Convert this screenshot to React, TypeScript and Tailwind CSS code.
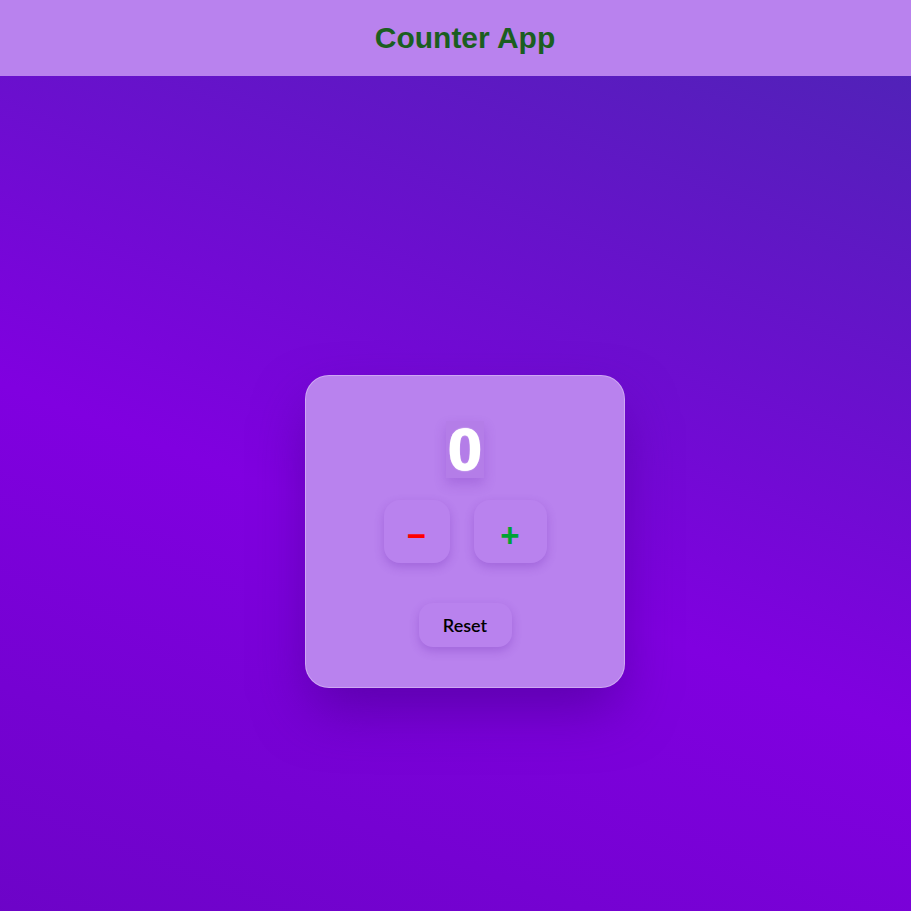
import React, { useState } from 'react';

export default function App() {
  const [count, setCount] = useState(0);

  return (
    <div className="min-h-screen w-[930px] bg-[linear-gradient(201deg,#4b26b3_0%,#8000e0_55%,#6a04c4_100%)] font-['Lato',sans-serif]">
      <header className="h-[76px] bg-[#b982ee] flex items-center justify-center">
        <h1 className="text-[30px] font-bold text-[#1b5e20] font-['Liberation_Sans',Arial,sans-serif] -mt-[2px]">
          Counter App
        </h1>
      </header>

      <main className="min-h-screen flex items-center justify-center">
        <div className="w-[320px] rounded-[24px] bg-[#b982ee] border border-white/30 shadow-[0_26px_55px_-6px_rgba(70,0,140,0.6)] pt-[45px] pb-[40px] flex flex-col items-center">
          <span className="px-[2px] h-[57px] flex items-center bg-[#b47de8] shadow-[0_6px_12px_rgba(110,40,180,0.25)] text-[60px] font-black leading-none text-white font-['Liberation_Sans',Arial,sans-serif] [text-shadow:0_0_1px_#fff,0_0_2px_#fff,1px_0_0_#fff,-1px_0_0_#fff]">
            {count}
          </span>

          <div className="mt-[22px] flex gap-6">
            <button
              onClick={() => setCount(count - 1)}
              className="w-[66px] h-[63px] rounded-2xl bg-[#b982ee] shadow-[0_4px_10px_rgba(110,40,180,0.3)] flex items-center justify-center pt-[9px] text-[33px] font-bold text-[#ff0000] font-['Liberation_Sans',Arial,sans-serif]"
            >
              −
            </button>
            <button
              onClick={() => setCount(count + 1)}
              className="w-[73px] h-[63px] rounded-2xl bg-[#b982ee] shadow-[0_4px_10px_rgba(110,40,180,0.3)] flex items-center justify-center pt-[8px] text-[33px] font-bold text-[#00a335] font-['Liberation_Sans',Arial,sans-serif]"
            >
              +
            </button>
          </div>

          <button
            onClick={() => setCount(0)}
            className="mt-10 w-[93px] h-[44px] rounded-[14px] bg-[#b982ee] shadow-[0_4px_10px_rgba(110,40,180,0.3)] text-[18px] font-semibold text-black"
          >
            Reset
          </button>
        </div>
      </main>
    </div>
  );
}
